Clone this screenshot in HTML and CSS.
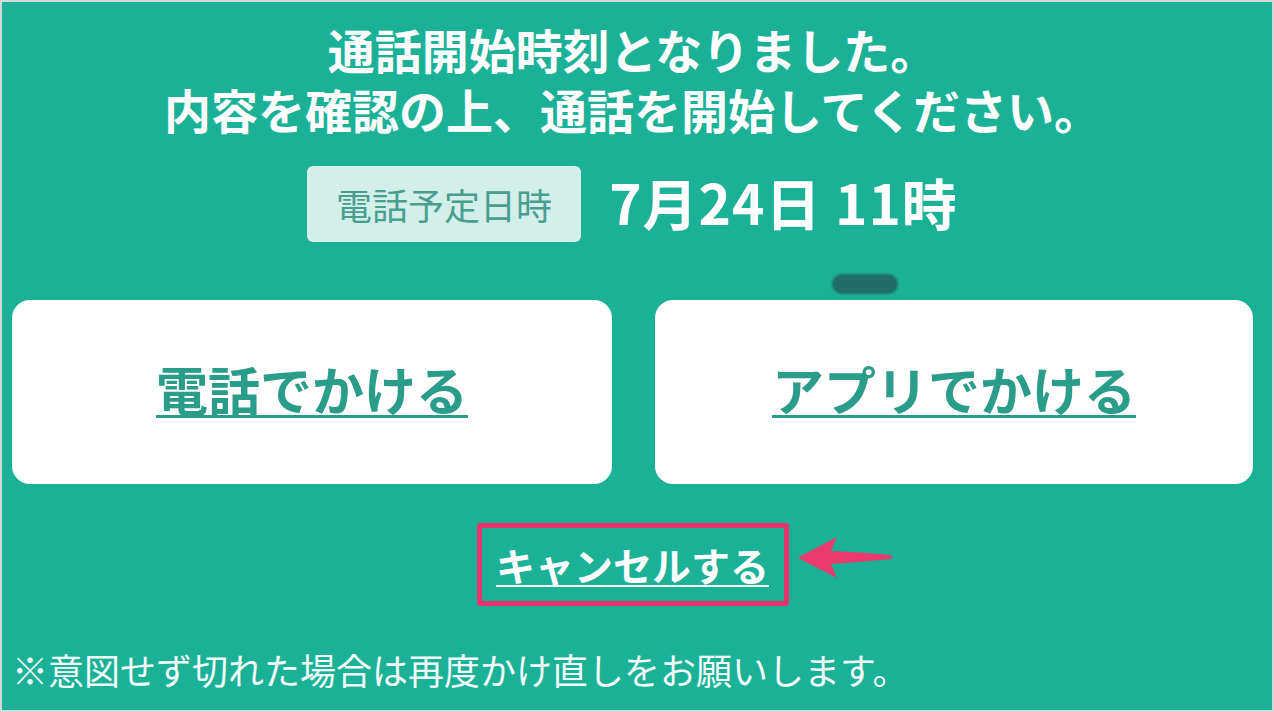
FILE: index.html
```html
<!DOCTYPE html>
<html lang="ja">
<head>
<meta charset="utf-8">
<title>通話開始</title>
<link rel="stylesheet" href="styles.css">
</head>
<body>
<div class="frame">
  <h1 class="title">
    <span class="line">通話開始時刻となりました。</span>
    <span class="line">内容を確認の上、通話を開始してください。</span>
  </h1>
  <div class="meta">
    <span class="label">電話予定日時</span>
    <span class="date">7月24日 11時</span>
  </div>
  <div class="blob-row"><span class="blob"></span></div>
  <div class="cards">
    <a class="card"><span class="card-text">電話でかける</span></a>
    <a class="card"><span class="card-text">アプリでかける</span></a>
  </div>
  <div class="cancel-row">
    <div class="cancel-box">
      <a class="cancel">キャンセルする</a>
      <svg class="arrow" width="95" height="44" viewBox="0 0 95 44" aria-hidden="true">
        <path d="M1 21 Q0 22 2 23 L39 42 L33 28 Q62 26 93 23 Q95 21 93 19 Q62 16 33 15 L39 1 Z" fill="#ea3a6e"/>
      </svg>
    </div>
  </div>
  <p class="note">※意図せず切れた場合は再度かけ直しをお願いします。</p>
</div>
</body>
</html>
```
FILE: styles.css
```css
* { box-sizing: border-box; }
html, body { margin: 0; padding: 0; }
body {
  width: 1274px;
  height: 712px;
  overflow: hidden;
  font-family: "Noto Sans CJK JP", "Noto Sans", sans-serif;
  background: #d4d4d4;
}
.frame {
  width: 1274px;
  height: 712px;
  border: 2px solid #d6d6d6;
  background: #1bb197;
  padding: 17px 19px 0 10px;
  display: flex;
  flex-direction: column;
  color: #ffffff;
}
.title {
  margin: 0;
  font-size: 47px;
  font-weight: 700;
  line-height: 60px;
  text-align: center;
  display: flex;
  flex-direction: column;
  align-items: center;
  letter-spacing: 0;
}
.meta {
  margin-top: 27px;
  display: flex;
  align-items: center;
  justify-content: center;
  gap: 28px;
  height: 76px;
}
.label {
  background: #d3efe9;
  color: #4a9e90;
  border-radius: 6px;
  height: 76px;
  padding: 0 29px;
  display: flex;
  align-items: center;
  font-size: 36px;
  font-weight: 400;
}
.date {
  font-size: 55px;
  font-weight: 700;
  letter-spacing: 1px;
  line-height: 1;
  margin-top: -6px;
}
.blob-row {
  height: 58px;
  display: flex;
  align-items: flex-end;
  padding-left: 820px;
  padding-bottom: 6px;
}
.blob {
  width: 66px;
  height: 20px;
  border-radius: 10px;
  background: #1f6c68;
  filter: blur(1px);
}
.cards {
  display: grid;
  grid-template-columns: 600px 598px;
  column-gap: 43px;
  height: 184px;
}
.card {
  background: #ffffff;
  border-radius: 18px;
  display: flex;
  align-items: center;
  justify-content: center;
  padding-bottom: 8px;
}
.card-text {
  color: #2a9c8a;
  font-size: 52px;
  font-weight: 700;
  text-decoration: underline;
  text-decoration-thickness: 3px;
  text-underline-offset: 4px;
}
.cancel-row {
  margin-top: 39px;
  display: flex;
  justify-content: center;
}
.cancel-box {
  position: relative;
  width: 312px;
  height: 83px;
  border: 5px solid #e8336c;
  border-radius: 3px;
  display: flex;
  align-items: center;
  justify-content: center;
}
.cancel {
  color: #ffffff;
  font-size: 39px;
  font-weight: 700;
  text-decoration: underline;
  text-decoration-thickness: 2px;
  text-underline-offset: 4px;
  padding-bottom: 2px;
}
.arrow {
  position: absolute;
  left: 316px;
  top: 8px;
}
.note {
  margin: 38px 0 0 0;
  font-size: 36px;
  font-weight: 400;
  line-height: 50px;
  color: #f2fbf9;
}
```
